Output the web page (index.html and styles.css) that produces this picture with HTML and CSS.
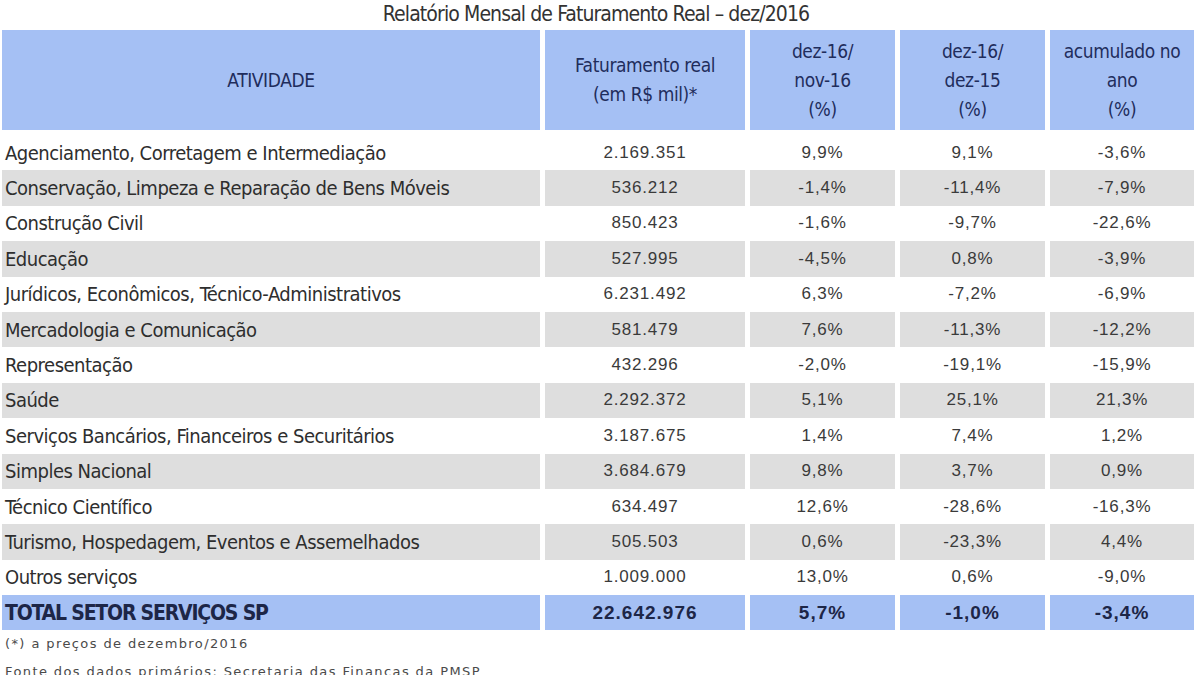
FILE: index.html
```html
<!DOCTYPE html>
<html lang="pt-BR">
<head>
<meta charset="utf-8">
<title>Relatório Mensal de Faturamento Real – dez/2016</title>
<link rel="stylesheet" href="styles.css">
</head>
<body>
<div class="page">
  <h1 class="title">Relatório Mensal de Faturamento Real – dez/2016</h1>
  <div class="row head">
    <div class="cell">ATIVIDADE</div>
    <div class="cell">Faturamento real<br>(em R$ mil)*</div>
    <div class="cell">dez-16/<br>nov-16<br>(%)</div>
    <div class="cell">dez-16/<br>dez-15<br>(%)</div>
    <div class="cell">acumulado no<br>ano<br>(%)</div>
  </div>
  <div class="body">
    <div class="row"><div class="cell name">Agenciamento, Corretagem e Intermediação</div><div class="cell">2.169.351</div><div class="cell">9,9%</div><div class="cell">9,1%</div><div class="cell">-3,6%</div></div>
    <div class="row alt"><div class="cell name">Conservação, Limpeza e Reparação de Bens Móveis</div><div class="cell">536.212</div><div class="cell">-1,4%</div><div class="cell">-11,4%</div><div class="cell">-7,9%</div></div>
    <div class="row"><div class="cell name">Construção Civil</div><div class="cell">850.423</div><div class="cell">-1,6%</div><div class="cell">-9,7%</div><div class="cell">-22,6%</div></div>
    <div class="row alt"><div class="cell name">Educação</div><div class="cell">527.995</div><div class="cell">-4,5%</div><div class="cell">0,8%</div><div class="cell">-3,9%</div></div>
    <div class="row"><div class="cell name">Jurídicos, Econômicos, Técnico-Administrativos</div><div class="cell">6.231.492</div><div class="cell">6,3%</div><div class="cell">-7,2%</div><div class="cell">-6,9%</div></div>
    <div class="row alt"><div class="cell name">Mercadologia e Comunicação</div><div class="cell">581.479</div><div class="cell">7,6%</div><div class="cell">-11,3%</div><div class="cell">-12,2%</div></div>
    <div class="row"><div class="cell name">Representação</div><div class="cell">432.296</div><div class="cell">-2,0%</div><div class="cell">-19,1%</div><div class="cell">-15,9%</div></div>
    <div class="row alt"><div class="cell name">Saúde</div><div class="cell">2.292.372</div><div class="cell">5,1%</div><div class="cell">25,1%</div><div class="cell">21,3%</div></div>
    <div class="row"><div class="cell name">Serviços Bancários, Financeiros e Securitários</div><div class="cell">3.187.675</div><div class="cell">1,4%</div><div class="cell">7,4%</div><div class="cell">1,2%</div></div>
    <div class="row alt"><div class="cell name">Simples Nacional</div><div class="cell">3.684.679</div><div class="cell">9,8%</div><div class="cell">3,7%</div><div class="cell">0,9%</div></div>
    <div class="row"><div class="cell name">Técnico Científico</div><div class="cell">634.497</div><div class="cell">12,6%</div><div class="cell">-28,6%</div><div class="cell">-16,3%</div></div>
    <div class="row alt"><div class="cell name">Turismo, Hospedagem, Eventos e Assemelhados</div><div class="cell">505.503</div><div class="cell">0,6%</div><div class="cell">-23,3%</div><div class="cell">4,4%</div></div>
    <div class="row"><div class="cell name">Outros serviços</div><div class="cell">1.009.000</div><div class="cell">13,0%</div><div class="cell">0,6%</div><div class="cell">-9,0%</div></div>
    <div class="row total"><div class="cell name">TOTAL SETOR SERVIÇOS SP</div><div class="cell">22.642.976</div><div class="cell">5,7%</div><div class="cell">-1,0%</div><div class="cell">-3,4%</div></div>
  </div>
  <p class="note">(*) a preços de dezembro/2016</p>
  <p class="note">Fonte dos dados primários: Secretaria das Finanças da PMSP</p>
</div>
</body>
</html>
```

FILE: styles.css
```css
html, body {
  margin: 0;
  padding: 0;
  background: #ffffff;
  overflow: hidden;
}

.page {
  width: 1200px;
  height: 675px;
  padding-left: 2px;
  box-sizing: border-box;
  overflow: hidden;
}

.title {
  margin: 0;
  height: 30px;
  line-height: 28px;
  text-align: center;
  font-family: "DejaVu Sans Condensed", "DejaVu Sans", sans-serif;
  font-stretch: condensed;
  font-weight: normal;
  font-size: 21px;
  letter-spacing: -0.9px;
  color: #333333;
  padding-right: 10px;
}

.row {
  display: grid;
  grid-template-columns: 538px 200px 145px 145px 144px;
  column-gap: 5px;
  height: 35.4px;
}

.cell {
  display: flex;
  align-items: center;
  justify-content: center;
  text-align: center;
  font-family: "Liberation Sans", Arial, sans-serif;
  font-size: 17px;
  letter-spacing: 0.8px;
  color: #3a3a3a;
}

.cell.name {
  justify-content: flex-start;
  text-align: left;
  padding-left: 3px;
  font-family: "DejaVu Sans Condensed", "DejaVu Sans", sans-serif;
  font-stretch: condensed;
  font-size: 20px;
  letter-spacing: -0.5px;
  color: #2e2e2e;
}

.row.head {
  height: 100px;
  margin-bottom: 5px;
}

.row.head .cell {
  background: #a5c0f4;
  font-family: "DejaVu Sans Condensed", "DejaVu Sans", sans-serif;
  font-stretch: condensed;
  font-size: 19px;
  line-height: 29px;
  letter-spacing: -0.4px;
  color: #1f2d5c;
}

.row.alt .cell {
  background: #dedede;
}

.row.total .cell {
  background: #a5c0f4;
  font-weight: bold;
  color: #1d2647;
  font-size: 19px;
  letter-spacing: 1px;
}

.row.total .cell.name {
  font-size: 21px;
  letter-spacing: -1.2px;
}

.note {
  margin: 0;
  height: 28px;
  line-height: 28px;
  padding-left: 3px;
  font-family: "DejaVu Sans", sans-serif;
  font-size: 13px;
  letter-spacing: 1.4px;
  color: #4a4a4a;
}
```
